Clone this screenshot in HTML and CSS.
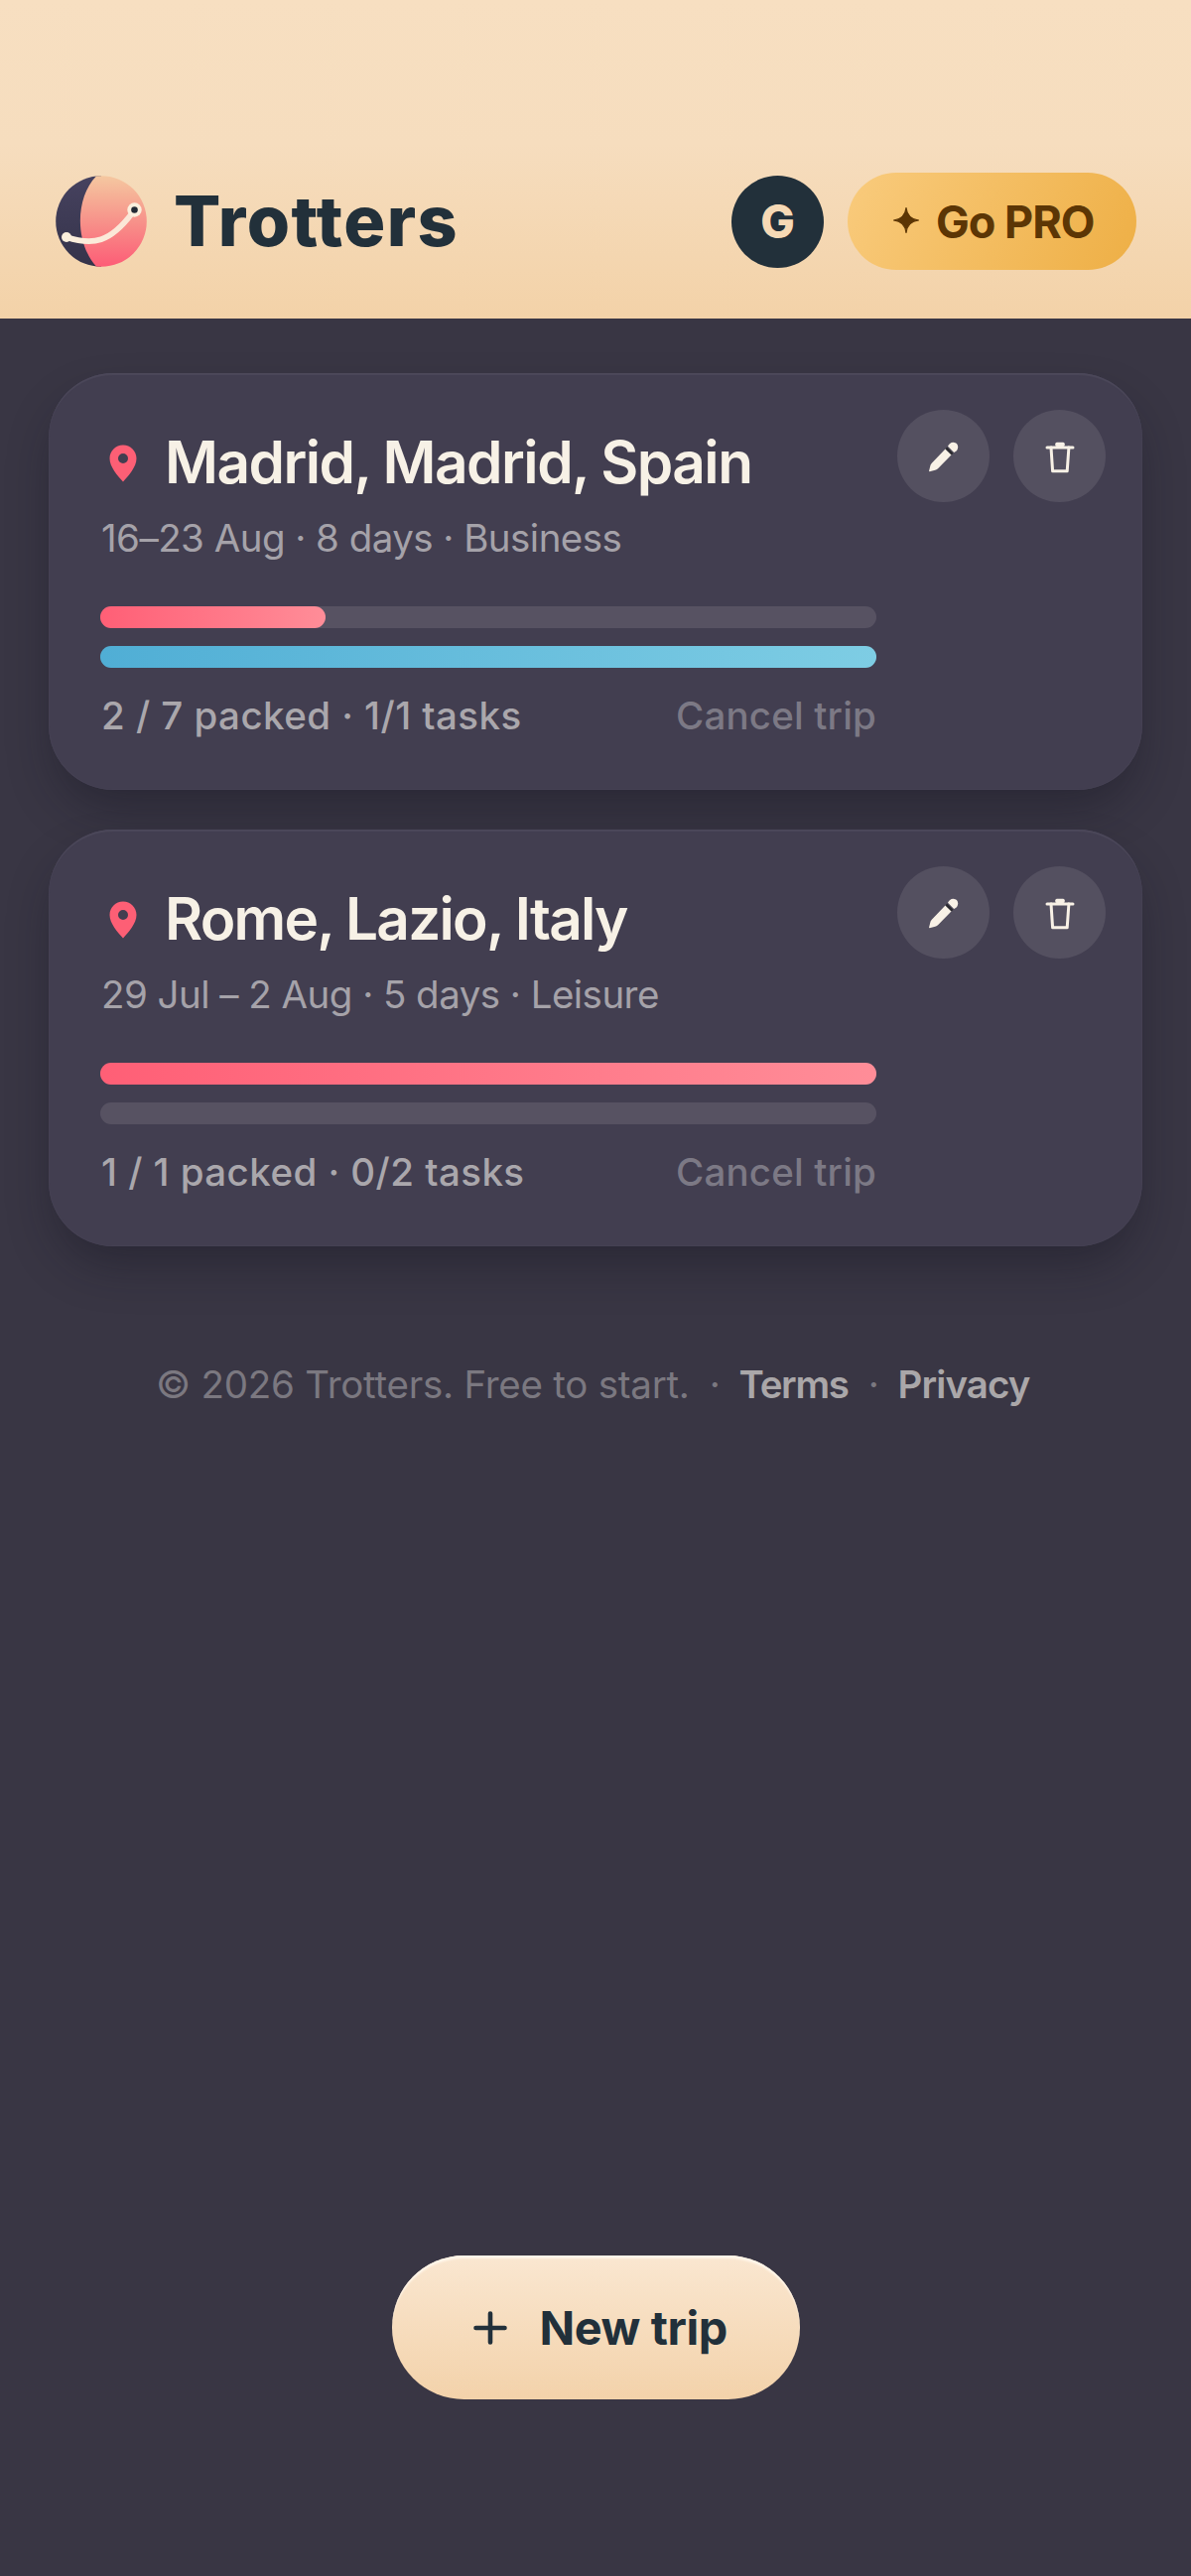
FILE: index.html
```
<!DOCTYPE html>
<html lang="en">
<head>
<meta charset="utf-8">
<title>Trotters</title>
<link rel="stylesheet" href="styles.css">
</head>
<body>
<svg class="defs" width="0" height="0" aria-hidden="true">
  <symbol id="pin" viewBox="0 0 28 38"><path fill-rule="evenodd" d="M14 .5C6.500.5.5 6.500.5 14c0 8.500 8 17.500 13.500 23.500C19.500 31.500 27.500 22.500 27.500 14 27.500 6.500 21.500.5 14 .5zm0 8.500a5 5 0 1 1 0 10 5 5 0 0 1 0-10z" fill="#fd5f75"/></symbol>
  <symbol id="pencil" viewBox="0 0 40 40">
    <path d="M5 34.800 6.600 28.600Q7 27.500 7.800 26.700L21.700 12.300 27.700 18.300 14 32.200Q12.500 33.500 11.200 33.800L5.600 35.300z" fill="#f8f1e6"/>
    <path d="M22.300 11.500 28.500 17.700" stroke="#2b2a30" stroke-width="2.600"/>
    <path d="M24 9.800Q25.500 6 29.500 5.700 34 6 34.200 10.500 34 14.500 30.200 16z" fill="#f8f1e6"/>
  </symbol>
  <symbol id="trash" viewBox="0 0 40 40" fill="none" stroke="#f8f1e6" stroke-width="3" stroke-linejoin="round" stroke-linecap="round">
    <path d="M7 11H33"/><path d="M16.800 8.500V7.200H23.200V8.500z"/><path d="M11 11 12.600 34.800H27.200L28.900 11"/>
  </symbol>
</svg>
<header class="header">
  <svg class="logo" viewBox="0 0 92 92">
    <defs>
      <linearGradient id="night" x1="0" y1="0" x2="0" y2="1"><stop offset="0" stop-color="#46425f"/><stop offset="1" stop-color="#35334a"/></linearGradient>
      <linearGradient id="day" gradientUnits="userSpaceOnUse" x1="0" y1="0" x2="0" y2="92"><stop offset="0" stop-color="#f5c8a0"/><stop offset=".5" stop-color="#f7928a"/><stop offset="1" stop-color="#fd5c76"/></linearGradient>
      <linearGradient id="route" x1="0" y1="0" x2="1" y2="0"><stop offset="0" stop-color="#fbefdc"/><stop offset="1" stop-color="#fbe6d6"/></linearGradient>
    </defs>
    <path d="M46 .2A45.800 45.800 0 0 0 46 91.800Z" fill="url(#night)"/>
    <path d="M41 .5C20 22 19 67 41 91.500Q43.500 91.800 46 91.800A45.800 45.800 0 0 0 46 .2Q43.500.2 41 .5z" fill="url(#day)"/>
    <path d="M11 62C38 71 55 67 77 38" fill="none" stroke="url(#route)" stroke-width="5.600" stroke-linecap="round"/>
    <circle cx="11" cy="62" r="5" fill="#fbefdc"/>
    <circle cx="79.500" cy="34.500" r="7.200" fill="#fbefdc"/>
    <circle cx="79.500" cy="34.500" r="3.300" fill="#232a34"/>
  </svg>
  <h1 class="brand">Trotters</h1>
  <div class="avatar">G</div>
  <button class="pro">
    <svg class="spark" viewBox="0 0 26 26"><path d="M13 0.500Q14.300 11.700 25.500 13 14.300 14.300 13 25.500 11.700 14.300.5 13 11.700 11.700 13 .5z" fill="#5c3605" stroke="#5c3605" stroke-width="1.200" stroke-linejoin="round"/></svg>
    <span>Go PRO</span>
  </button>
</header>
<main class="main">
  <article class="card">
    <div class="actions">
      <button class="round"><svg><use href="#pencil"/></svg></button>
      <button class="round"><svg><use href="#trash"/></svg></button>
    </div>
    <h2 class="title"><svg class="pin"><use href="#pin"/></svg><span class="madrid">Madrid, Madrid, Spain</span></h2>
    <p class="dates">16–23 Aug · 8 days · Business</p>
    <div class="bars">
      <div class="bar"><div class="fill packed" style="width:29%"></div></div>
      <div class="bar"><div class="fill tasks" style="width:100%"></div></div>
    </div>
    <div class="meta"><span class="count">2 / 7 packed · 1/1 tasks</span><span class="cancel">Cancel trip</span></div>
  </article>
  <article class="card">
    <div class="actions">
      <button class="round"><svg><use href="#pencil"/></svg></button>
      <button class="round"><svg><use href="#trash"/></svg></button>
    </div>
    <h2 class="title"><svg class="pin"><use href="#pin"/></svg><span class="rome">Rome, Lazio, Italy</span></h2>
    <p class="dates">29 Jul – 2 Aug · 5 days · Leisure</p>
    <div class="bars">
      <div class="bar"><div class="fill packed" style="width:100%"></div></div>
      <div class="bar"></div>
    </div>
    <div class="meta"><span class="count">1 / 1 packed · 0/2 tasks</span><span class="cancel">Cancel trip</span></div>
  </article>
  <footer class="footer">
    <span>© 2026 Trotters. Free to start.</span><span>·</span><a class="terms">Terms</a><span>·</span><a class="privacy">Privacy</a>
  </footer>
  <button class="new">
    <svg class="plus" viewBox="0 0 34 34"><path d="M17 2.500v29M2.500 17h29" stroke="#22303a" stroke-width="4.600" stroke-linecap="round"/></svg>
    <span>New trip</span>
  </button>
</main>
</body>
</html>
```
FILE: styles.css
```
* { box-sizing: border-box; }
body {
  margin: 0;
  min-height: 2596px;
  display: flex;
  flex-direction: column;
  background: #393644;
  font-family: Inter, "Liberation Sans", sans-serif;
  white-space: nowrap;
}
h1, h2, p { margin: 0; }
button { border: 0; padding: 0; font-family: inherit; }
.defs { position: absolute; }

.header {
  height: 321px;
  padding: 125px 55px 0 56px;
  display: flex;
  align-items: center;
  background: linear-gradient(#f7dfc1 0, #f6ddbe 45%, #f3d2a8 100%);
}
.logo { width: 92px; height: 92px; flex: none; }
.brand {
  margin-left: 27px;
  font-size: 70px;
  line-height: 80px;
  font-weight: 800;
  letter-spacing: 1.4px;
  color: #22303a;
}
.avatar {
  width: 93px;
  height: 93px;
  margin-left: auto;
  border-radius: 50%;
  display: grid;
  place-items: center;
  background: #22303a;
  color: #f6d9b5;
  font-size: 46px;
  font-weight: 800;
}
.pro {
  width: 291px;
  height: 98px;
  margin-left: 24px;
  padding-left: 46px;
  border-radius: 49px;
  display: flex;
  align-items: center;
  gap: 17px;
  background: linear-gradient(120deg, #f9cb7d, #eeaf45);
  color: #5c3605;
  font-size: 45px;
  font-weight: 700;
  letter-spacing: -1px;
}
.spark { width: 26px; height: 26px; margin-top: -2px; }

.main {
  flex: 1;
  padding: 55px 49px 178px;
  display: flex;
  flex-direction: column;
}
.card {
  position: relative;
  height: 420px;
  padding: 57px 52px 52px;
  border-radius: 65px;
  background: #423e50;
  box-shadow: inset 0 3px 1px -1px #4c485a, inset 0 0 0 1px #454153, 0 24px 48px -8px rgba(20, 18, 32, .42);
}
.card + .card { margin-top: 40px; }
.actions {
  position: absolute;
  top: 37px;
  right: 37px;
  display: flex;
  gap: 24px;
}
.round {
  width: 93px;
  height: 93px;
  border-radius: 50%;
  display: grid;
  place-items: center;
  background: #545060;
}
.round svg { width: 40px; height: 40px; }
.title {
  height: 64px;
  display: flex;
  align-items: center;
  font-size: 58.5px;
  line-height: 64px;
  font-weight: 600;
  color: #f7f1e6;
}
.title span { padding-top: 1px; }
.pin { width: 28px; height: 38px; margin: 3px 28px 0 9px; flex: none; }
.madrid { letter-spacing: -1.53px; }
.rome { letter-spacing: -1.75px; }
.dates {
  margin-top: 22px;
  padding-left: 1px;
  font-size: 38.5px;
  line-height: 46px;
  letter-spacing: -.54px;
  color: #a5a2a9;
}
.bars {
  width: 782px;
  margin-top: 46px;
  display: grid;
  gap: 18px;
}
.bar { height: 22px; border-radius: 11px; background: #575262; }
.fill { height: 22px; border-radius: 11px; }
.packed { background: linear-gradient(90deg, #ff5f76, #ff8d98); }
.tasks { background: linear-gradient(90deg, #50aed5, #7ecde4); }
.meta {
  width: 782px;
  margin-top: 25px;
  padding-left: 1px;
  display: flex;
  justify-content: space-between;
  font-size: 38.5px;
  line-height: 46px;
  font-weight: 500;
}
.count { letter-spacing: .45px; color: #aaa7ac; }
.cancel { letter-spacing: .18px; color: #7c7985; }

.footer {
  margin-top: 116px;
  padding-left: 108px;
  display: flex;
  font-size: 38.5px;
  line-height: 46px;
  letter-spacing: -.25px;
  color: #7b7880;
}
.footer span + span { margin-left: 20px; }
.footer a { margin-left: 19px; font-weight: 600; color: #aaa7a9; }
.footer a + span { margin-left: 20px; }
.footer .terms { letter-spacing: -1.3px; }
.footer .privacy { letter-spacing: -.9px; }

.new {
  width: 411px;
  height: 145px;
  margin: auto auto 0;
  padding-left: 82px;
  border-radius: 73px;
  display: flex;
  align-items: center;
  gap: 33px;
  background: linear-gradient(#fae7d1, #f3d2aa);
  box-shadow: inset 0 4px 2px -1px #fff6ea;
  color: #22303a;
  font-size: 46.8px;
  font-weight: 700;
  letter-spacing: -.4px;
}
.plus { width: 34px; height: 34px; }
```
